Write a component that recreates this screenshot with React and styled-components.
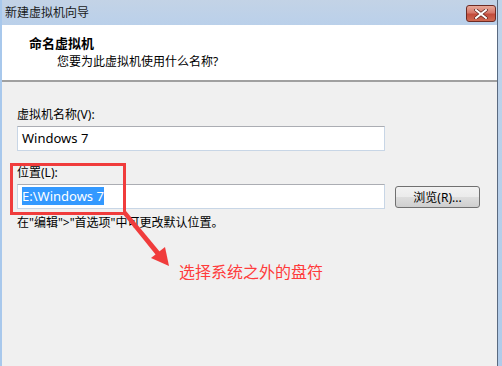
import styled, { createGlobalStyle } from "styled-components";

const Global = createGlobalStyle`
  html, body { margin: 0; padding: 0; background: #f0f0f0; }
  body { width: 502px; height: 366px; overflow: hidden; }
`;

const cjk = `"Segoe UI", "Noto Sans", "Noto Sans CJK SC", sans-serif`;

const Frame = styled.div`
  width: 502px;
  height: 366px;
  display: flex;
  box-sizing: border-box;
  border-left: 2px solid #a8c8ec;
  background: #f0f0f0;
  font-family: ${cjk};
  font-size: 12px;
  color: #000;
`;

const Win = styled.div`
  flex: 1;
  display: flex;
  flex-direction: column;
  border-right: 1px solid #5a6a80;
`;

const Edge = styled.div`
  width: 4px;
  background: linear-gradient(#c0d4ea, #b0cbea);
`;

const TitleBar = styled.div`
  height: 25px;
  display: flex;
  align-items: flex-start;
  justify-content: space-between;
  padding: 0 0 0 3px;
  background: linear-gradient(#c3d3e6, #bad0ea);
  font-size: 12px;
  color: #1a1a1a;

  & > span {
    line-height: 26px;
  }
`;

const CloseBtn = styled.div`
  width: 28px;
  height: 15px;
  margin: 5px 1px 0 0;
  border: 1px solid #6d2b24;
  border-radius: 3px;
  background: linear-gradient(#e8a99a 0%, #d7786a 45%, #c24b3b 55%, #d06a52 100%);
  display: flex;
  align-items: center;
  justify-content: center;
`;

const Header = styled.div`
  height: 57px;
  background: #fff;
  border-bottom: 2px solid #a0a0a0;
  padding: 10px 0 0 27px;
  box-sizing: border-box;
`;

const Heading = styled.div`
  font-weight: bold;
  font-size: 13px;
  line-height: 17px;
`;

const Sub = styled.div`
  padding-left: 28px;
  margin-top: 2px;
  line-height: 16px;
`;

const Body = styled.div`
  position: relative;
  flex: 1;
  padding: 25px 0 0 15px;
`;

const Label = styled.div`
  line-height: 16px;
  margin-bottom: 3px;
`;

const Row = styled.div`
  display: flex;
  align-items: center;
  gap: 10px;
  margin-bottom: ${(p) => p.$mb || 0}px;
`;

const Input = styled.div`
  width: 368px;
  height: 25px;
  box-sizing: border-box;
  background: #fff;
  border: 1px solid #c8d6e6;
  border-top-color: #abadb3;
  padding: 3px 4px;
  font-size: 13px;
  line-height: 17px;
`;

const Sel = styled.span`
  background: #3399ff;
  color: #fff;
`;

const Button = styled.div`
  width: 85px;
  height: 22px;
  box-sizing: border-box;
  border: 1px solid #707070;
  border-radius: 3px;
  background: linear-gradient(#f2f2f2 0%, #ebebeb 50%, #dddddd 51%, #cfcfcf 100%);
  display: flex;
  align-items: center;
  justify-content: center;
  font-size: 12px;
`;

const Hint = styled.div`
  margin-top: 6px;
  line-height: 16px;
`;

const Mark = styled.div`
  position: absolute;
  left: 8px;
  top: 81px;
  width: 116px;
  height: 52px;
  box-sizing: border-box;
  border: 3px solid #f03c3c;
`;

const Arrow = styled.svg`
  position: absolute;
  left: 0;
  top: 0;
  pointer-events: none;
`;

const Note = styled.div`
  position: absolute;
  left: 177px;
  top: 180px;
  color: #ff3b3b;
  font-size: 16px;
  line-height: 20px;
`;

export default function App() {
  return (
    <>
      <Global />
      <Frame>
        <Win>
          <TitleBar>
            <span>新建虚拟机向导</span>
            <CloseBtn>
              <svg width="14" height="10" viewBox="0 0 14 10">
                <path d="M2 1 L12 9 M12 1 L2 9" stroke="#5a1f18" strokeWidth="3.4" strokeLinecap="square" />
                <path d="M2 1 L12 9 M12 1 L2 9" stroke="#fff" strokeWidth="2" strokeLinecap="square" />
              </svg>
            </CloseBtn>
          </TitleBar>
          <Header>
            <Heading>命名虚拟机</Heading>
            <Sub>您要为此虚拟机使用什么名称?</Sub>
          </Header>
          <Body>
            <Label>虚拟机名称(V):</Label>
            <Row $mb={14}>
              <Input>Windows 7</Input>
            </Row>
            <Label>位置(L):</Label>
            <Row>
              <Input>
                <Sel>E:\Windows 7</Sel>
              </Input>
              <Button>浏览(R)...</Button>
            </Row>
            <Hint>在"编辑"&gt;"首选项"中可更改默认位置。</Hint>
            <Mark />
            <Arrow width="200" height="200" viewBox="0 0 200 200">
              <path d="M120 131 L124 129 L158 170 L154 173 Z" fill="#f03c3c" />
              <polygon points="167,184 149,176 163,165" fill="#f03c3c" />
            </Arrow>
            <Note>选择系统之外的盘符</Note>
          </Body>
        </Win>
        <Edge />
      </Frame>
    </>
  );
}
